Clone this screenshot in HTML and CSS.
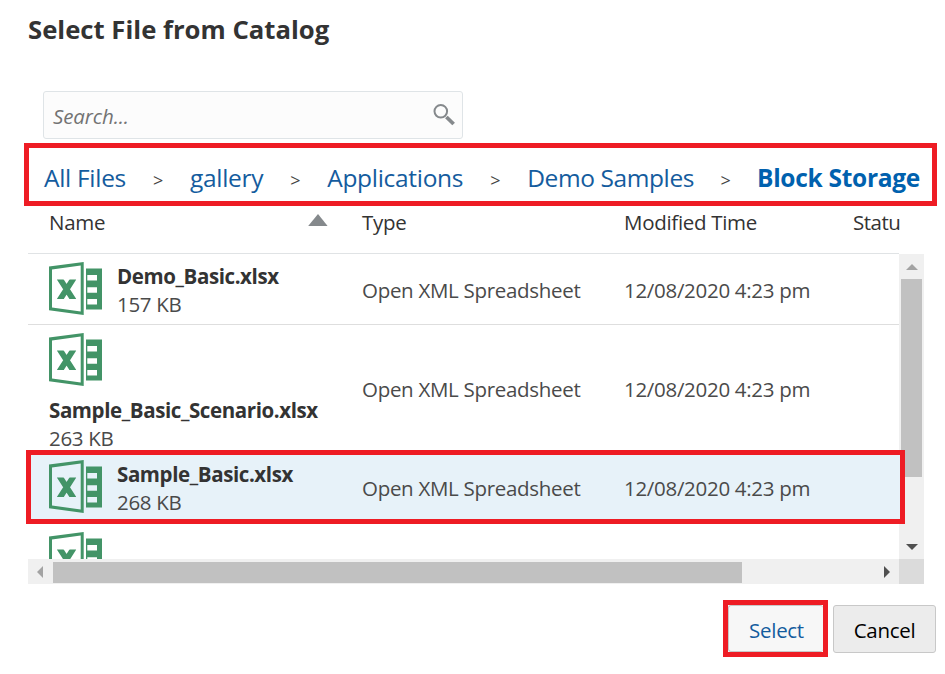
FILE: index.html
```html
<!DOCTYPE html>
<html lang="en">
<head>
<meta charset="utf-8">
<title>Select File from Catalog</title>
<link rel="stylesheet" href="styles.css">
</head>
<body>
<svg class="defs" width="0" height="0" aria-hidden="true">
  <symbol id="sheet" viewBox="0 0 53 53">
    <path fill="#439467" fill-rule="evenodd" d="M0 4.6 34.7 0V53L0 48.2ZM3 7.4V45.6L31.7 49.4V3.6ZM37 6.6H53V47.6H37ZM38.3 13V18.6H48V13ZM38.3 25.2V30.8H48V25.2ZM38.3 37V42.4H48V37Z"/>
    <svg x="8" y="17.6" width="19.2" height="19.4" viewBox="0 0 19.2 19.4"><path stroke="#439467" stroke-width="5.8" d="M2.2-1.8 17 21.2M17-1.8 2.2 21.2"/></svg>
  </symbol>
</svg>
<main class="dialog">
  <h1 class="title">Select File from Catalog</h1>
  <div class="search">
    <span class="hint">Search...</span>
    <svg class="lens" viewBox="0 0 22 22"><circle cx="7.8" cy="7.3" r="6.3" fill="none" stroke="#85898c" stroke-width="2"/><path d="m13.4 13 7.2 7" stroke="#85898c" stroke-width="3.8"/></svg>
  </div>
  <nav class="crumbs">
    <a>All Files</a><i>&gt;</i><a>gallery</a><i>&gt;</i><a>Applications</a><i>&gt;</i><a class="parent">Demo Samples</a><i>&gt;</i><a class="current">Block Storage</a>
  </nav>
  <div class="row head">
    <span class="hname">Name</span><svg class="sort" viewBox="0 0 20 12"><path fill="#85898c" d="M10 0 19.6 12H.2Z"/></svg>
    <span class="type">Type</span><span class="time">Modified Time</span><span class="status">Statu</span>
  </div>
  <div class="grid">
    <div class="list">
      <div class="row file">
        <div class="name"><svg class="icon"><use href="#sheet"/></svg><div><strong>Demo_Basic.xlsx</strong><small>157 KB</small></div></div>
        <span class="type">Open XML Spreadsheet</span><span class="time">12/08/2020 4:23 pm</span>
      </div>
      <div class="row file tall">
        <div class="name stacked"><svg class="icon"><use href="#sheet"/></svg><div><strong>Sample_Basic_Scenario.xlsx</strong><small>263 KB</small></div></div>
        <span class="type">Open XML Spreadsheet</span><span class="time">12/08/2020 4:23 pm</span>
      </div>
      <div class="row file selected">
        <div class="name"><svg class="icon"><use href="#sheet"/></svg><div><strong>Sample_Basic.xlsx</strong><small>268 KB</small></div></div>
        <span class="type">Open XML Spreadsheet</span><span class="time">12/08/2020 4:23 pm</span>
      </div>
      <div class="row file last"><div class="name stacked"><svg class="icon"><use href="#sheet"/></svg></div></div>
    </div>
    <div class="vbar"><svg viewBox="0 0 12 6"><path fill="#a3a3a3" d="M6 0 12 6H0Z"/></svg><div class="thumb"></div><svg viewBox="0 0 12 6"><path fill="#505050" d="M0 0H12L6 6Z"/></svg></div>
    <div class="hbar"><svg viewBox="0 0 6 12"><path fill="#a3a3a3" d="M6 0V12L0 6Z"/></svg><div class="thumb"></div><svg viewBox="0 0 6 12"><path fill="#505050" d="M0 0 6 6 0 12Z"/></svg></div>
    <div class="corner"></div>
  </div>
  <footer class="actions"><div class="mark"><button class="select">Select</button></div><button class="cancel">Cancel</button></footer>
</main>
</body>
</html>
```
FILE: styles.css
```css
* { box-sizing: border-box; }
body { margin: 0; background: #fff; color: #333; font: 20.5px/28px "Open Sans", "Noto Sans", sans-serif; letter-spacing: -0.3px; white-space: nowrap; }
.defs { position: absolute; }
.dialog { width: 945px; height: 674px; overflow: hidden; display: flex; flex-direction: column; }
.title { margin: 0 0 0 28px; height: 91px; padding-top: 13px; font-size: 25.7px; line-height: 34px; font-weight: 700; letter-spacing: 0; }
.search { margin-left: 43px; width: 420px; height: 48px; padding: 0 7px 0 9px; display: flex; align-items: center; justify-content: space-between; background: #fcfcfc; border: 1px solid #dfe4e7; border-radius: 3px; }
.hint { font-style: italic; color: #737373; padding-top: 1px; letter-spacing: -0.1px; }
.lens { width: 22px; height: 22px; }
.crumbs { margin: 4px 0 0 24px; width: 913px; height: 63px; padding: 13px 0 0 15px; border: 5px solid #ee1c24; display: flex; align-items: flex-start; font-size: 24.5px; line-height: 34px; }
.crumbs a { color: #145c9e; }
.crumbs i { width: 64px; text-align: center; font-style: normal; font-size: 18px; line-height: 39px; color: #444; }
.crumbs i:last-of-type { width: 63px; }
.crumbs .parent { letter-spacing: -0.4px; }
.crumbs .current { font-weight: 700; color: #0061ae; }
.row { display: grid; grid-template-columns: 313px 262px 229px 67px; width: 871px; align-items: center; }
.head { margin-left: 28px; height: 48px; padding-bottom: 15px; grid-template-columns: 280px 33px 262px 229px 67px; border-bottom: 1px solid #e0e3e5; }
.hname { padding-left: 21px; }
.sort { width: 20px; height: 12px; margin-top: -4px; }
.type, .time, .status { padding-left: 21px; }
.status { letter-spacing: -0.5px; }
.grid { margin-left: 28px; width: 896px; display: grid; grid-template-columns: 871px 25px; grid-template-rows: 305px 25px; }
.list { overflow: hidden; position: relative; margin-left: -2px; width: 879px; padding-left: 2px; z-index: 1; }
.file { height: 71px; padding-top: 2px; border-bottom: 1px solid #dedede; color: #4a4a4a; }
.name { padding-left: 21px; display: flex; gap: 15px; align-items: flex-start; }
.name > div { display: flex; flex-direction: column; }
.icon { width: 53px; height: 53px; flex: none; }
strong { color: #333; letter-spacing: -0.4px; }
small { font-size: 20.5px; }
.tall { height: 127px; padding-top: 0; border: 0; }
.stacked { flex-direction: column; gap: 10px; padding-top: 8px; }
.selected { background: #e7f2f9; outline: 5px solid #ee1c24; height: 64px; width: 869px; margin: 3px 0 0 3px; padding-top: 1px; border: 0; grid-template-columns: 310px 262px 229px 67px; }
.selected .name { padding-left: 18px; }
.last { border: 0; margin-top: -1px; }
.vbar, .hbar { background: #f0f0f0; display: flex; align-items: center; }
.vbar { flex-direction: column; padding: 10px 0 9px; }
.vbar svg { width: 12px; height: 6px; }
.vbar .thumb { width: 21px; height: 198px; margin: 9px 0 auto; background: #c1c1c1; }
.hbar { padding: 1px 9px 0; }
.hbar svg { width: 6px; height: 12px; }
.hbar .thumb { width: 689px; height: 21px; margin: 0 auto 0 10px; background: #c1c1c1; }
.corner { background: #dbdbdb; }
.actions { margin: 16px 9px 0 auto; display: flex; gap: 5px; align-items: center; }
.mark { width: 105px; height: 57px; border: 5px solid #ee1c24; }
button { height: 48px; padding: 2px 0 0; font: inherit; letter-spacing: inherit; border: 1px solid #c8c8c8; border-radius: 3px; }
.select { display: block; width: 95px; height: 47px; padding-left: 1px; background: #f7f7f7; color: #145c9e; border-right: 0; }
.cancel { width: 103px; background: #ececec; color: #000; }
```
